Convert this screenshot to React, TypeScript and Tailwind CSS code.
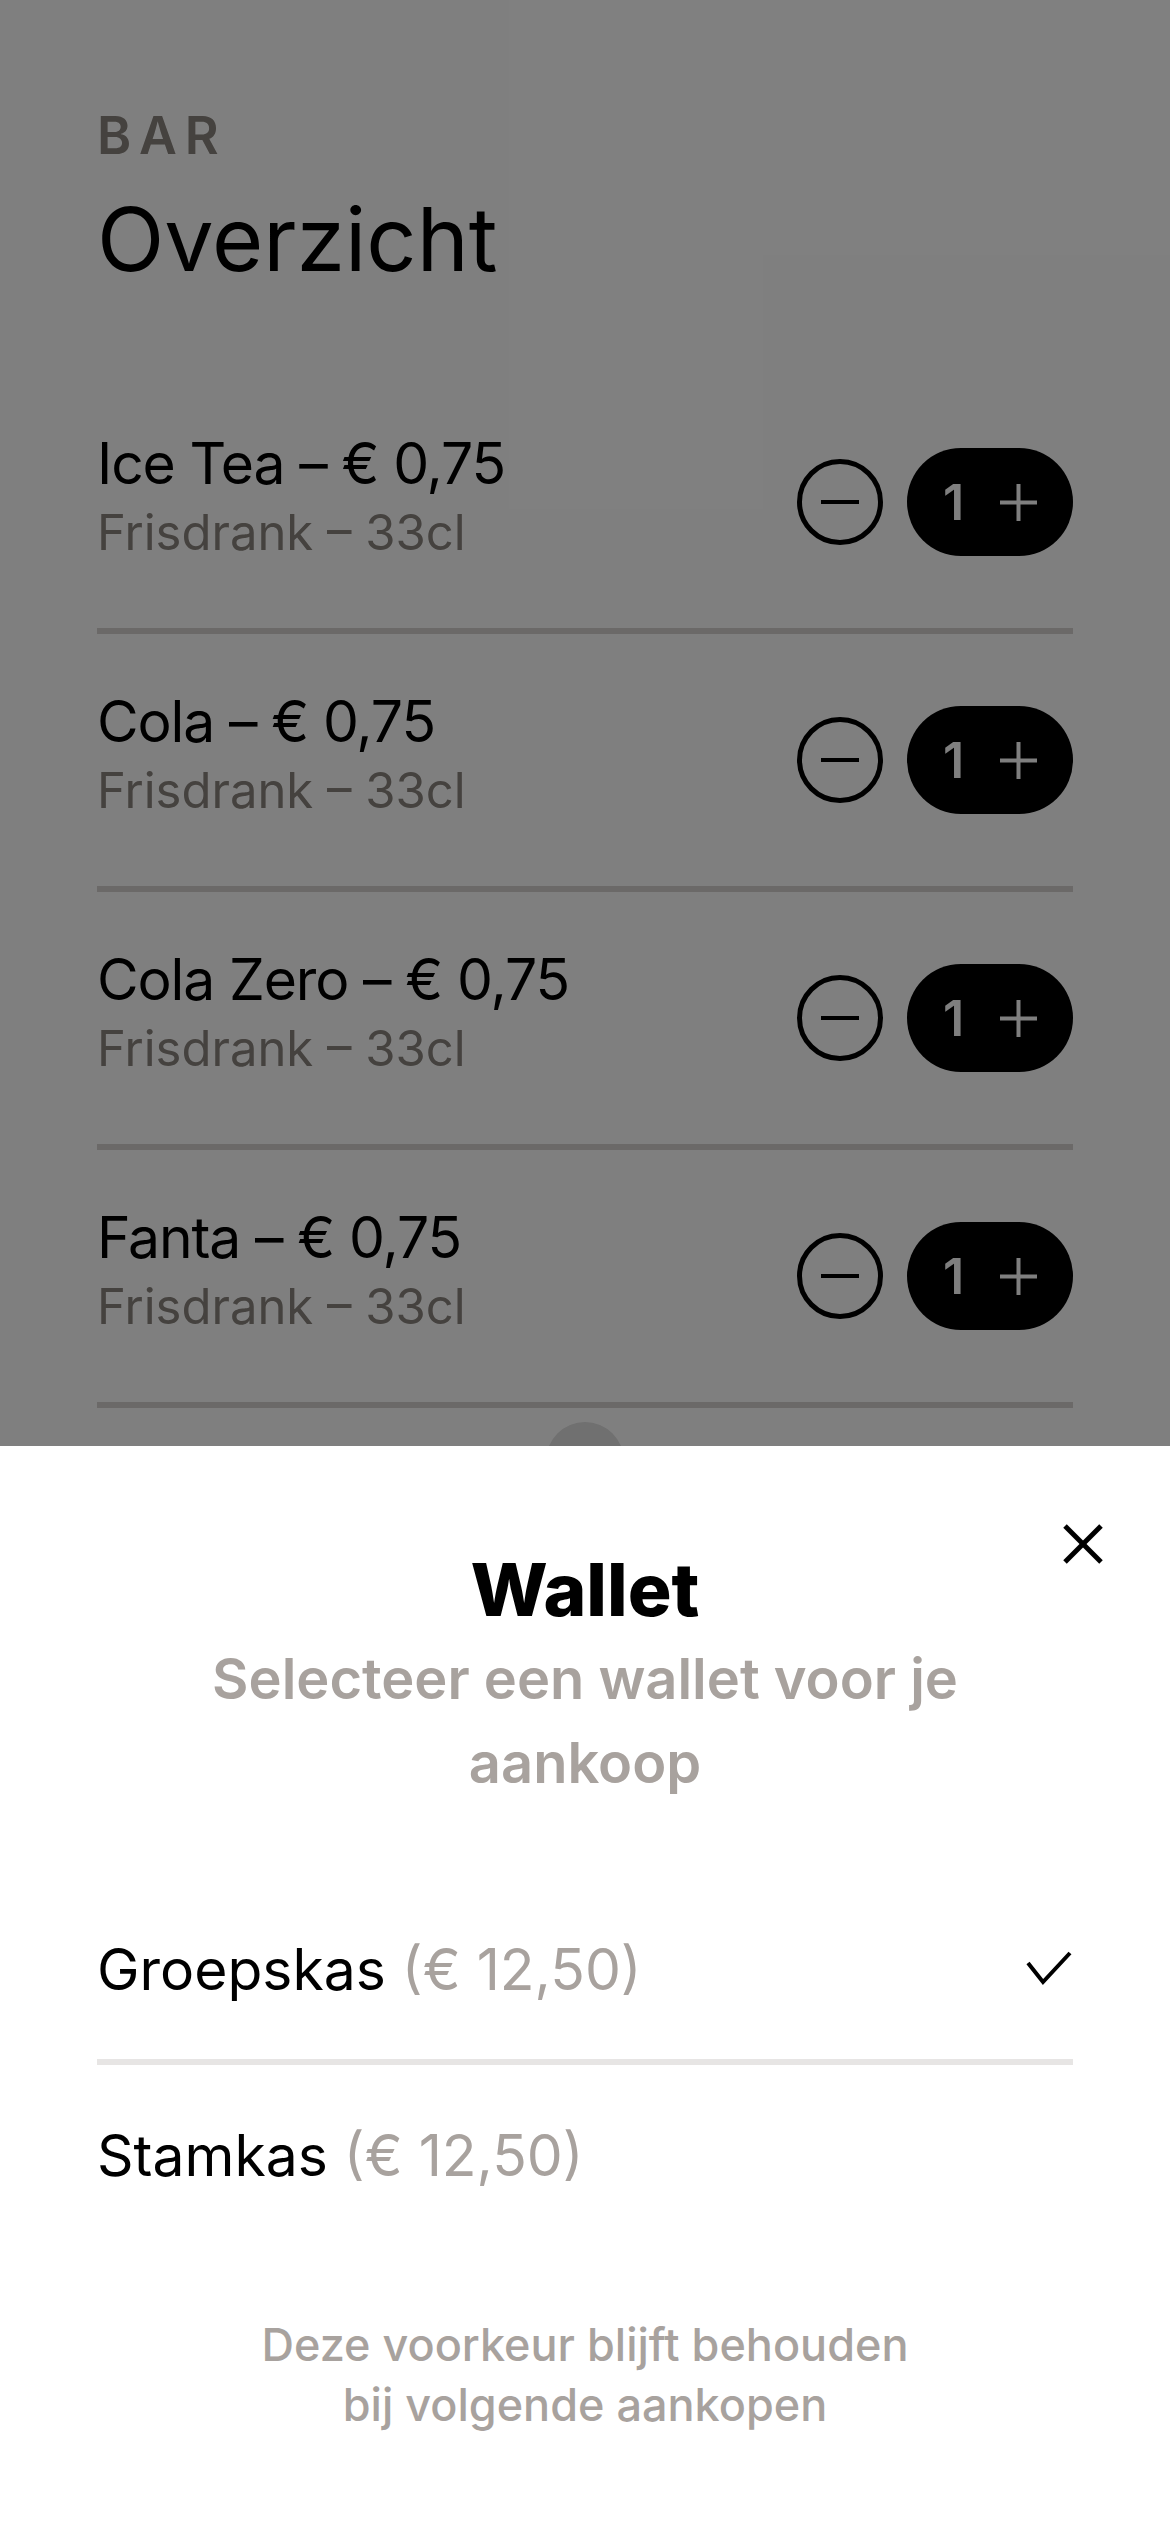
import React from "react";

const drinks = [
  { name: "Ice Tea", price: "€ 0,75", info: "Frisdrank – 33cl" },
  { name: "Cola", price: "€ 0,75", info: "Frisdrank – 33cl" },
  { name: "Cola Zero", price: "€ 0,75", info: "Frisdrank – 33cl" },
  { name: "Fanta", price: "€ 0,75", info: "Frisdrank – 33cl" },
];

const wallets = [
  { name: "Groepskas", balance: "(€ 12,50)", selected: true },
  { name: "Stamkas", balance: "(€ 12,50)", selected: false },
];

function MinusButton() {
  return (
    <button className="flex h-[86px] w-[86px] items-center justify-center">
      <svg width="86" height="86" viewBox="0 0 86 86" fill="none">
        <circle cx="43" cy="43" r="40.5" stroke="black" strokeWidth="5" />
        <line x1="24" y1="43" x2="62" y2="43" stroke="black" strokeWidth="4" />
      </svg>
    </button>
  );
}

function CountPill({ count }: { count: number }) {
  return (
    <div className="flex h-[108px] w-[166px] items-center rounded-full bg-black pl-[36px] pr-[36px]">
      <span className="text-[50px] font-semibold leading-none text-white">
        {count}
      </span>
      <svg
        className="ml-auto"
        width="37"
        height="37"
        viewBox="0 0 37 37"
        fill="none"
      >
        <line x1="0" y1="18.5" x2="37" y2="18.5" stroke="white" strokeWidth="4" />
        <line x1="18.5" y1="0" x2="18.5" y2="37" stroke="white" strokeWidth="4" />
      </svg>
    </div>
  );
}

function DrinkRow({ name, price, info }: (typeof drinks)[number]) {
  return (
    <div className="flex h-[258px] items-center justify-between border-b-[6px] border-[#d6d3d1]">
      <div className="pb-3">
        <div className="text-[57px] leading-none tracking-[-0.02em] text-black">
          {name} – {price}
        </div>
        <div className="mt-[16px] text-[49px] leading-none text-[#8a847e]">
          {info}
        </div>
      </div>
      <div className="flex items-center gap-[24px]">
        <MinusButton />
        <CountPill count={1} />
      </div>
    </div>
  );
}

function WalletSheet() {
  return (
    <div className="absolute inset-x-0 bottom-0 h-[1086px] bg-white px-[97px] pt-[107px]">
      <button className="absolute right-[67px] top-[78px]">
        <svg width="40" height="40" viewBox="0 0 40 40" fill="none">
          <line x1="2" y1="2" x2="38" y2="38" stroke="black" strokeWidth="5" />
          <line x1="38" y1="2" x2="2" y2="38" stroke="black" strokeWidth="5" />
        </svg>
      </button>

      <h2 className="text-center text-[73px] font-extrabold leading-none text-black">
        Wallet
      </h2>
      <p className="mx-auto mt-[11px] max-w-[860px] text-center text-[56px] font-semibold leading-[84px] text-[#a8a29e]">
        Selecteer een wallet voor je aankoop
      </p>

      <div className="mt-[74px]">
        {wallets.map((wallet, i) => (
          <div
            key={wallet.name}
            className={
              i === 0
                ? "flex h-[186px] items-center justify-between border-b-[6px] border-[#e7e5e4]"
                : "flex h-[180px] items-center justify-between"
            }
          >
            <div className="text-[57px] leading-none text-black">
              {wallet.name}{" "}
              <span className="text-[#a8a29e]">{wallet.balance}</span>
            </div>
            {wallet.selected && (
              <svg width="48" height="36" viewBox="0 0 48 36" fill="none">
                <polyline
                  points="3,12 18,31 45,2"
                  stroke="black"
                  strokeWidth="4"
                  fill="none"
                />
              </svg>
            )}
          </div>
        ))}
      </div>

      <p className="mx-auto mt-[70px] max-w-[700px] text-center text-[45px] font-medium leading-[60px] text-[#a8a29e]">
        Deze voorkeur blijft behouden bij volgende aankopen
      </p>
    </div>
  );
}

export default function App() {
  return (
    <div className="relative h-[2532px] w-full overflow-hidden bg-white font-['Inter',sans-serif]">
      <div className="px-[97px] pt-[110px]">
        <div className="text-[52px] font-semibold leading-none tracking-[0.15em] text-[#8a847e]">
          BAR
        </div>
        <h1 className="mt-[33px] text-[88px] leading-none text-black">
          Overzicht
        </h1>

        <div className="mt-[93px]">
          {drinks.map((drink) => (
            <DrinkRow key={drink.name} {...drink} />
          ))}
        </div>
        <div className="mx-auto mt-[14px] h-[78px] w-[78px] rounded-full bg-[#e0e0e0]" />
      </div>

      <div className="absolute inset-0 bg-black/50" />
      <WalletSheet />
    </div>
  );
}
